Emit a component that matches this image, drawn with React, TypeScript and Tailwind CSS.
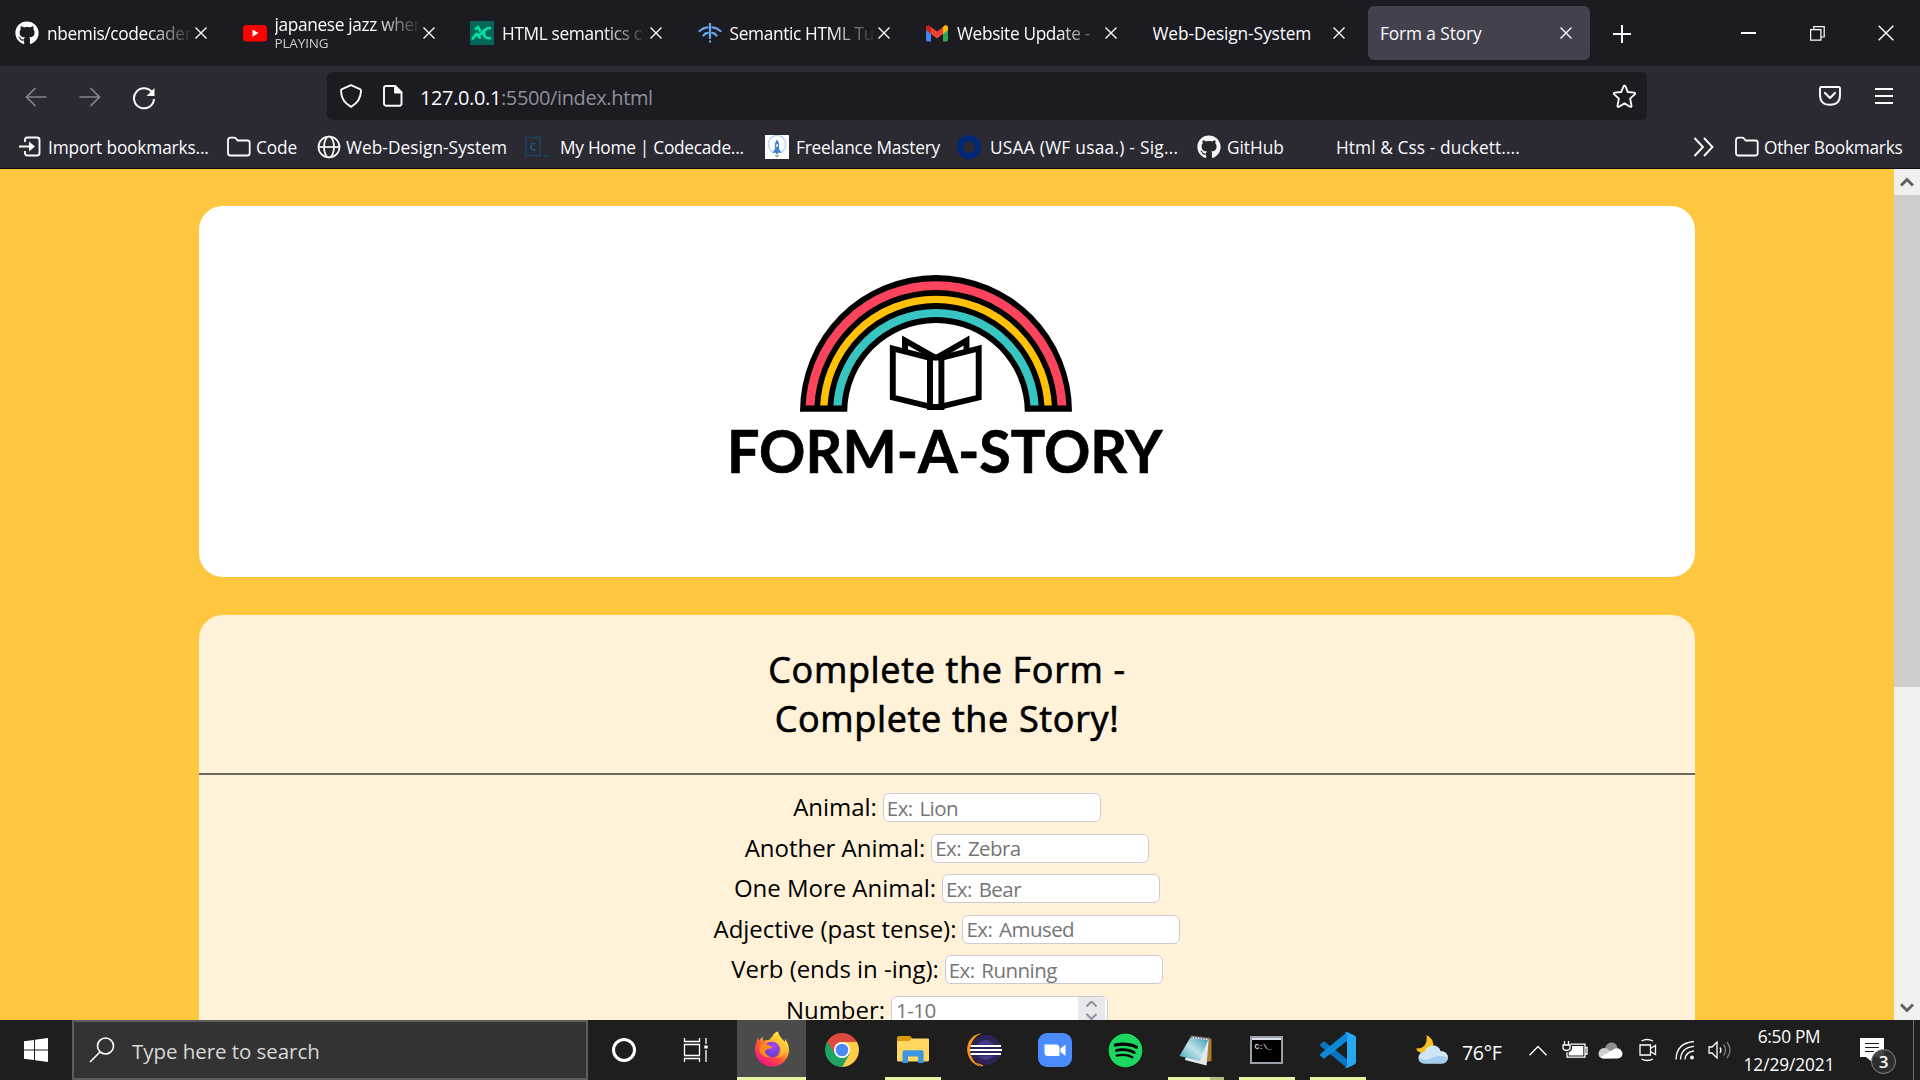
import React from "react";
import { FaGithub, FaSpotify } from "react-icons/fa";

/* ---------- small stroke icons ---------- */

function Cross({ size = 12, width = 1.4 }: { size?: number; width?: number }) {
  return (
    <svg width={size} height={size} viewBox="0 0 12 12" className="shrink-0 overflow-visible" stroke="#fbfbfe" strokeWidth={width} fill="none">
      <path d="M0.5 0.5 11.5 11.5M11.5 0.5 0.5 11.5" />
    </svg>
  );
}

function FolderIcon() {
  return (
    <svg width="24" height="24" viewBox="0 0 24 24" fill="none" stroke="#fbfbfe" strokeWidth="1.8" strokeLinejoin="round" className="shrink-0">
      <path d="M1 18V5.500Q1 2.600 3.500 2.600H7.200Q8.300 2.600 9 3.500L10.500 5.500H20.500Q22.700 5.500 22.700 7.800V18Q22.700 20.500 20.300 20.500H3.400Q1 20.500 1 18Z" />
    </svg>
  );
}

/* ---------- tab favicons ---------- */

function YoutubeIcon() {
  return (
    <svg width="24" height="24" viewBox="0 0 24 24" className="shrink-0">
      <rect x="0" y="4" width="24" height="16.500" rx="3.500" fill="#f00" />
      <path d="M9.500 8.500v7.200l6-3.600z" fill="#fff" />
    </svg>
  );
}

function AcIcon() {
  return (
    <svg width="24" height="24" viewBox="0 0 24 24" className="shrink-0">
      <rect width="24" height="24" fill="#03685b" />
      <path d="M5 8.500 8 6 10.500 10.500M2 18.500 6.500 13 10.500 17.500M5 14l6-.8 3.500-4.500M21 7.500c-3-1.500-7.500 1-7 5.500.3 3.500 3.500 5 7 4" fill="none" stroke="#04e3a5" strokeWidth="2.600" />
    </svg>
  );
}

function FlowIcon() {
  return (
    <svg width="24" height="24" viewBox="0 0 24 24" className="shrink-0" fill="none" stroke="#6aa5e8" strokeWidth="2.300" strokeLinecap="round">
      <path d="M12 3v14M12 20.500v.2M1.500 10Q5.500 6.500 9.500 6.300M22.500 10Q18.500 6.500 14.500 6.300M5.500 14.500Q7 12 9.500 12M18.500 14.500Q17 12 14.500 12" />
    </svg>
  );
}

function GmailIcon() {
  return (
    <svg width="24" height="24" viewBox="0 0 24 24" className="shrink-0">
      <path d="M1 9v9.700Q1 20.500 2.800 20.500H6V12z" fill="#4285f4" />
      <path d="M18 12v8.500h3.200q1.800 0 1.800-1.800V9z" fill="#34a853" />
      <path d="M18 6v7l5-4V6.500Q23 4 20.700 4 19.800 4 18 6z" fill="#fbbc04" />
      <path d="M6 13V6L12 10.600 18 6v7l-6 4.500z" fill="#ea4335" />
      <path d="M1 6.500V9l5 4V6Q4.500 4 3.300 4 1 4 1 6.500z" fill="#c5221f" />
    </svg>
  );
}

type Tab = { title: string; icon?: React.ReactNode; sub?: string; fade?: boolean; active?: boolean };

const tabs: Tab[] = [
  { title: "nbemis/codecaden", icon: <FaGithub size={24} color="#fff" className="shrink-0" />, fade: true },
  { title: "japanese jazz when", icon: <YoutubeIcon />, sub: "PLAYING", fade: true },
  { title: "HTML semantics c", icon: <AcIcon />, fade: true },
  { title: "Semantic HTML Tu", icon: <FlowIcon />, fade: true },
  { title: "Website Update -", icon: <GmailIcon />, fade: true },
  { title: "Web-Design-System" },
  { title: "Form a Story", active: true },
];

function TabItem({ tab }: { tab: Tab }) {
  return (
    <div className={`mr-[5.500px] flex h-[54px] w-[222px] shrink-0 items-center rounded-md pl-3 ${tab.active ? "bg-[#42414d]" : ""}`}>
      {tab.icon}
      <div
        className={`flex-1 overflow-hidden whitespace-nowrap ${tab.icon ? "ml-[8px]" : ""} ${
          tab.fade ? "[mask-image:linear-gradient(to_right,#000_68%,transparent_99%)]" : ""
        }`}
      >
        <div className={`text-[17.300px] ${tab.fade ? "tracking-[-0.350px]" : "tracking-[-0.100px]"} ${tab.sub ? "leading-[21px]" : "pt-[2px] leading-6"}`}>
          {tab.title}
        </div>
        {tab.sub && <div className="text-[13.500px] leading-[17px] tracking-[-0.150px] text-[#c9c9cd]">{tab.sub}</div>}
      </div>
      <div className="mr-[18px] flex w-3 shrink-0 justify-center">
        <Cross />
      </div>
    </div>
  );
}

function TabStrip() {
  return (
    <div className="flex h-[66px] items-center bg-[#1c1b22] pl-[3px]">
      {tabs.map((t) => (
        <TabItem key={t.title} tab={t} />
      ))}
      <svg width="18" height="18" viewBox="0 0 18 18" stroke="#fbfbfe" strokeWidth="2" className="ml-[17px] mt-[2px] shrink-0">
        <path d="M9 0v18M0 9h18" />
      </svg>
      <div className="ml-[110px] h-[1.500px] w-[15px] shrink-0 bg-white" />
      <svg width="15" height="15" viewBox="0 0 15 15" fill="none" stroke="#fff" strokeWidth="1.200" className="ml-[54px] shrink-0">
        <path d="M.6 3.600h10.300v10.500H.6zM3.800 3.600V.7h10.400v10.300h-3.300" />
      </svg>
      <div className="ml-[53px]">
        <Cross size={16} width={1.1} />
      </div>
    </div>
  );
}

/* ---------- navigation bar ---------- */

function NavBar() {
  return (
    <div className="flex h-[60px] items-center bg-[#2b2a33] pl-[25px]">
      <svg width="22" height="20" viewBox="0 0 22 20" fill="none" stroke="#85848b" strokeWidth="1.700" className="mt-0.5 shrink-0">
        <path d="M21.500 10H1.500M10.500 1 1.500 10l9 9" />
      </svg>
      <svg width="22" height="20" viewBox="0 0 22 20" fill="none" stroke="#85848b" strokeWidth="1.700" className="ml-8 mt-0.5 shrink-0">
        <path d="M.5 10h20M11.500 1l9 9-9 9" />
      </svg>
      <svg width="24" height="24" viewBox="0 0 24 24" fill="none" stroke="#fbfbfe" strokeWidth="2" className="ml-[31px] mt-1 shrink-0">
        <path d="M20.500 7A10 10 0 1 0 22 13" />
        <path d="M22.500 2v8h-8z" fill="#fbfbfe" stroke="none" />
      </svg>
      <div className="ml-[171px] flex h-12 w-[1320px] shrink-0 items-center rounded-md bg-[#1c1b22] pl-[13px]">
        <svg width="22" height="24" viewBox="0 0 22 24" fill="none" stroke="#fbfbfe" strokeWidth="1.900" strokeLinejoin="round" className="shrink-0">
          <path d="M11 1.200 20 5.200Q21 5.700 21 6.800 20.800 17.500 11 22.800 1.200 17.500 1 6.800 1 5.700 2 5.200Z" />
        </svg>
        <svg width="20" height="22" viewBox="0 0 20 22" fill="none" stroke="#fbfbfe" strokeWidth="1.900" strokeLinejoin="round" className="ml-[21px] shrink-0">
          <path d="M3 1h9l6.500 6.500V18.500q0 2.200-2.200 2.200H3.200Q1 20.700 1 18.500V3Q1 1 3 1z" />
          <path d="M12 1v6.500h6.500z" fill="#fbfbfe" />
        </svg>
        <div className="ml-[17px] flex-1 whitespace-nowrap pt-[3px] text-[20px] tracking-[-0.380px] text-[#8f8f98]">
          <span className="text-[#fbfbfe]">127.0.0.1</span>:5500/index.html
        </div>
        <svg width="25" height="25" viewBox="0 0 24 24" fill="none" stroke="#fbfbfe" strokeWidth="1.800" strokeLinejoin="round" className="mr-[10px] shrink-0">
          <path d="M12 1.500Q12.600 1.500 13 2.400L15.200 7.700 21.300 8.300Q23 8.600 21.800 10L17.400 14l1.300 6.700q.2 1.700-1.400 1.100L12 18.600 6.700 21.800q-1.600.6-1.400-1.100L6.600 14 2.200 10Q1 8.600 2.700 8.300L8.800 7.700 11 2.400Q11.400 1.500 12 1.500Z" />
        </svg>
      </div>
      <svg width="22" height="20" viewBox="0 0 22 20" fill="none" stroke="#fbfbfe" strokeWidth="1.900" strokeLinejoin="round" className="ml-[172px] shrink-0">
        <path d="M2.500 1h17Q21 1 21 2.600V9Q21 18.800 11 18.800T1 9V2.600Q1 1 2.500 1z" />
        <path d="M6 7l5 5 5-5" strokeLinecap="round" strokeWidth="2.200" />
      </svg>
      <svg width="18" height="16" viewBox="0 0 18 16" stroke="#fbfbfe" strokeWidth="1.900" className="ml-[34px] shrink-0">
        <path d="M0 1h18M0 8h18M0 15h18" />
      </svg>
    </div>
  );
}

/* ---------- bookmarks ---------- */

function BookmarksBar() {
  return (
    <div className="flex h-[42px] items-center whitespace-nowrap bg-[#2b2a33] pl-[18px] text-[17.300px] tracking-[-0.150px]">
      <div className="flex w-[209px] shrink-0 items-center">
        <svg width="24" height="24" viewBox="0 0 24 24" fill="none" stroke="#fbfbfe" strokeWidth="1.900" className="mr-[6px]">
          <path d="M7 7V5q0-2.500 2.500-2.500h9.500Q21.500 2.500 21.500 5v13q0 2.500-2.500 2.500H9.500Q7 20.500 7 18v-2M1 11.500h11" />
          <path d="M11 6.500l6 5-6 5z" fill="#fbfbfe" stroke="none" />
        </svg>
        <span className="pt-[2px]">Import bookmarks...</span>
      </div>
      <div className="flex w-[90px] shrink-0 items-center gap-[5px]">
        <FolderIcon />
        <span className="pt-[2px]">Code</span>
      </div>
      <div className="flex w-[208px] shrink-0 items-center gap-[5px]">
        <svg width="24" height="24" viewBox="0 0 24 24" fill="none" stroke="#fbfbfe" strokeWidth="1.700">
          <circle cx="12" cy="12" r="10.500" />
          <ellipse cx="12" cy="12" rx="5" ry="10.500" />
          <path d="M1.500 12h21" />
        </svg>
        <span className="pt-[2px] tracking-[0.040px]">Web-Design-System</span>
      </div>
      <div className="flex w-[240px] shrink-0 items-center gap-[11px]">
        <svg width="24" height="24" viewBox="0 0 24 24" fill="none" stroke="#1d4360" strokeWidth="1.700">
          <path d="M1 2.500h14v18H1zM18 21h6" />
          <path d="M10.500 9Q8.500 7.500 6.500 9.200 5 11.500 6.500 14q2 1.700 4 .2" stroke="#1f4f78" />
        </svg>
        <span className="pt-[2px] tracking-[-0.270px]">My Home | Codecade...</span>
      </div>
      <div className="flex w-[192px] shrink-0 items-center gap-[7px]">
        <svg width="24" height="24" viewBox="0 0 24 24">
          <rect width="24" height="24" fill="#fff" />
          <path d="M7.500 17A8.500 9 0 1 1 16.500 17" fill="none" stroke="#b9d5f2" strokeWidth="1.300" />
          <path d="M12 4.500Q15 8 14 14l3 4.500-3-1-2 2-2-2-3 1 3-4.500Q9 8 12 4.500z" fill="#3b82cf" />
          <circle cx="12" cy="10.500" r="1.300" fill="#e5f1fd" />
          <path d="M9.500 20h5l-2.500 3z" fill="#a9a9ad" />
        </svg>
        <span className="pt-[2px] tracking-[-0.200px]">Freelance Mastery</span>
      </div>
      <div className="flex w-[240px] shrink-0 items-center gap-[9px]">
        <div className="h-6 w-6 rounded-full border-[6px] border-[#00277a]" />
        <span className="pt-[2px] tracking-[0.270px]">USAA (WF usaa.) - Sig...</span>
      </div>
      <div className="flex w-[139px] shrink-0 items-center gap-[6px]">
        <div className="flex h-6 w-6 items-center justify-center rounded-full bg-[#24292e]">
          <FaGithub size={24} color="#f5f5f5" />
        </div>
        <span className="pt-[2px] tracking-[-0.050px]">GitHub</span>
      </div>
      <div className="w-[357px] shrink-0 pt-[2px] tracking-[0.100px]">Html &amp; Css - duckett....</div>
      <svg width="22" height="20" viewBox="0 0 22 20" fill="none" stroke="#fbfbfe" strokeWidth="1.900" className="shrink-0">
        <path d="M1.500 1l8.500 9-8.500 9M11 1l8.500 9-8.500 9" />
      </svg>
      <div className="ml-[20px] flex items-center gap-[5px]">
        <FolderIcon />
        <span className="pt-[2px] tracking-[-0.270px]">Other Bookmarks</span>
      </div>
    </div>
  );
}

/* ---------- page ---------- */

function Logo() {
  return (
    <svg width="440" height="206" viewBox="726 272 440 206">
      <clipPath id="bow">
        <rect x="790" y="270" width="300" height="135.500" />
      </clipPath>
      <path d="M800 411.700a136 136.700 0 0 1 272 0z" fill="#000" />
      <g fill="none" clipPath="url(#bow)">
        <circle cx="936" cy="411.700" r="126.100" stroke="#fc455c" strokeWidth="8.800" />
        <circle cx="936" cy="411.700" r="112.300" stroke="#ffc107" strokeWidth="7.400" />
        <circle cx="936" cy="411.700" r="98.700" stroke="#38c5c1" strokeWidth="8.200" />
      </g>
      <path d="M847.200 412a88.800 89 0 0 1 177.600 0z" fill="#fff" />
      <g fill="#fff" stroke="#000" strokeWidth="5.900">
        <path d="M905 350.500V340.500L935 357.500" />
        <path d="M966.500 350.500V340.500L937 357.500" />
        <path d="M892.800 348.500 930 358v48.500L892.800 397.500z" />
        <path d="M978.700 348.500 941 358v48.500L978.700 397.500z" />
        <path d="M930 357.500h11.400v49.500H930z" />
      </g>
      <text x="727" y="472.600" textLength="435.500" lengthAdjust="spacingAndGlyphs" fontFamily="Lato" fontWeight="700" fontSize="59" fill="#000" stroke="#000" strokeWidth="0.700">
        FORM-A-STORY
      </text>
    </svg>
  );
}

const fields = [
  ["Animal:", "Ex: Lion"],
  ["Another Animal:", "Ex: Zebra"],
  ["One More Animal:", "Ex: Bear"],
  ["Adjective (past tense):", "Ex: Amused"],
  ["Verb (ends in -ing):", "Ex: Running"],
];

const inputClass =
  "mt-[1px] h-[29px] w-[218px] rounded-[6px] border border-[#cbcbd0] bg-white pl-[3px] text-[20.500px] leading-none tracking-[-0.550px] [word-spacing:2px] text-black outline-none placeholder:text-[#757575]";

function Page() {
  return (
    <div className="flex h-[851px] overflow-hidden bg-[#ffc640]">
      <main className="w-[1894px] px-[199px] pt-[37px] text-black">
        <section className="flex h-[371px] justify-center rounded-[24px] bg-white pr-[3px] pt-[66px]">
          <Logo />
        </section>
        <section className="mt-[38px] h-[500px] rounded-t-[24px] bg-[#fff2d9]">
          <h1 className="h-[160px] border-b-2 border-[#6b6862] pt-[30px] text-center text-[36px] leading-[49px] tracking-[0.650px] [-webkit-text-stroke:0.700px_#000]">
            Complete the Form -<br />
            Complete the Story!
          </h1>
          <div className="mt-[12px]">
            {fields.map(([label, hint]) => (
              <div key={label} className="flex h-[40.500px] items-center justify-center gap-[6px] text-[24px] tracking-[-0.030px]">
                <label>{label}</label>
                <input className={inputClass} placeholder={hint} />
              </div>
            ))}
            <div className="flex h-[40.500px] items-center justify-center gap-[6px] text-[24px] tracking-[-0.030px]">
              <label>Number:</label>
              <div className="mt-[1px] flex h-[29px] w-[217px] items-center rounded-[6px] border border-[#cbcbd0] bg-white pl-[4px] text-[20.500px] tracking-[-0.550px] text-[#757575]">
                1-10
                <div className="ml-auto mr-[2px] flex h-full w-[27px] items-center justify-center bg-[#e9e9ed]">
                  <svg width="11" height="19" viewBox="0 0 11 19" fill="none" stroke="#8f8f9d" strokeWidth="2">
                    <path d="M.5 5.500l5-5 5 5M.5 13l5 5 5-5" />
                  </svg>
                </div>
              </div>
            </div>
          </div>
        </section>
      </main>
      <div className="flex w-[26px] flex-col bg-[#f0f0f0]">
        <div className="flex h-[26px] items-center justify-center">
          <svg width="14" height="10" viewBox="0 0 14 10" fill="none" stroke="#606060" strokeWidth="3">
            <path d="M1 8.500l6-6 6 6" />
          </svg>
        </div>
        <div className="h-[492px] bg-[#cdcdcd]" />
        <div className="mt-auto flex h-[24px] items-center justify-center">
          <svg width="14" height="10" viewBox="0 0 14 10" fill="none" stroke="#606060" strokeWidth="3">
            <path d="M1 1.500l6 6 6-6" />
          </svg>
        </div>
      </div>
    </div>
  );
}

/* ---------- taskbar ---------- */

function FirefoxIcon() {
  return (
    <svg width="36" height="36" viewBox="0 0 36 36">
      <defs>
        <linearGradient id="ffa" x1="0.850" y1="0.100" x2="0.250" y2="0.950">
          <stop offset="0" stopColor="#fff44f" />
          <stop offset="0.350" stopColor="#ffb22c" />
          <stop offset="0.600" stopColor="#ff5634" />
          <stop offset="1" stopColor="#f2128a" />
        </linearGradient>
        <radialGradient id="ffb" cx="0.600" cy="0.300" r="0.800">
          <stop offset="0" stopColor="#a947f5" />
          <stop offset="1" stopColor="#5040c8" />
        </radialGradient>
      </defs>
      <path d="M2.500 11 4 7l1.500 3Q6.500 6.500 9 6v4q3-1.500 6-1Q18 6 18.500 5 20.500 1 24 .5q.5 4 4 7.500L31 11V8q4 5 4 11A17 16.500 0 0 1 1 19Q1 14 2.500 11z" fill="url(#ffa)" />
      <circle cx="18" cy="18.500" r="7.800" fill="url(#ffb)" />
      <path d="M5.500 14Q11 11 18.500 16q-1 2-4.500 2-3 .5-3 3 1 3.500 5.500 4.500-7 2-11-5z" fill="#ff8b20" />
      <path d="M19 9q8 1 8 10 0 6-6 8 10 0 10.500-9Q31 11 24 3q-3 3-5 6z" fill="#ffc832" opacity=".7" />
    </svg>
  );
}

function ChromeIcon() {
  return (
    <svg width="34" height="34" viewBox="0 0 34 34">
      <path d="M17 17 2.300 8.500A17 17 0 0 0 17 34l8-13z" fill="#1da462" />
      <path d="M17 9h15a17 17 0 0 1-15 25l7.500-13z" fill="#ffcd46" />
      <path d="M2.300 8.500 10 21l7-4V9h15l-.3-.5A17 17 0 0 0 2.300 8.500z" fill="#dd4b3e" />
      <circle cx="17" cy="17" r="8" fill="#fff" />
      <circle cx="17" cy="17" r="6.300" fill="#4a8af4" />
    </svg>
  );
}

function ExplorerIcon() {
  return (
    <svg width="32" height="28" viewBox="0 0 32 28">
      <path d="M0 2Q0 0 2 0h11l3 3h14q2 0 2 2v6H0z" fill="#dc9a08" />
      <path d="M0 6.500Q0 5 1.500 5H12l3-2.500h16q1 0 1 1V24q0 1.500-1.500 1.500h-29Q0 25.500 0 24z" fill="#ffd862" />
      <path d="M5.500 27V16q0-1.800 1.800-1.800h17.500q1.800 0 1.800 1.800v11h-5.500v-6.500H11V27z" fill="#3a97e0" />
    </svg>
  );
}

function EclipseIcon() {
  return (
    <svg width="36" height="34" viewBox="0 0 36 34">
      <path d="M16 .5A17 17 0 0 0 17 33.500L17 31A14 14 0 0 1 16 .5z" fill="#f7941e" />
      <path d="M15 .3C-3 4-3 30 15 33.700 1 27 1 7 15 .3z" fill="#f7941e" />
      <circle cx="19.700" cy="17" r="15.300" fill="#2c2255" />
      <circle cx="19.500" cy="17" r="10" fill="#463889" />
      <path d="M4.500 11.500h30.800v11H4.500z" fill="#2c2255" />
      <path d="M4.500 13H35M4 17h32M4.500 21H35" stroke="#fff" strokeWidth="2" />
    </svg>
  );
}

function ZoomIcon() {
  return (
    <svg width="34" height="34" viewBox="0 0 34 34">
      <rect width="34" height="34" rx="9" fill="#4a8cff" />
      <path d="M6.500 11.500H18q3.500 0 3.500 3.500v8H10q-3.500 0-3.500-3.500zM22.500 15.500 27.500 11.500v11.500l-5-4z" fill="#fff" />
    </svg>
  );
}

function NotepadIcon() {
  return (
    <svg width="34" height="32" viewBox="0 0 34 32">
      <defs>
        <linearGradient id="note" x1="0" y1="1" x2="1" y2="0">
          <stop offset="0" stopColor="#3aa3b5" />
          <stop offset="0.500" stopColor="#bfe4ec" />
          <stop offset="1" stopColor="#3c99ac" />
        </linearGradient>
      </defs>
      <path d="M30 4l2.500 1v22l-5 1z" fill="#a77b2b" />
      <path d="M12 2l18 2.500-2.500 27L6 26z" fill="#e4eaec" />
      <path d="M11 4l18 2-8 21L.5 22z" fill="url(#note)" />
      <path d="M12 2.500l18 2" stroke="#6d6d6d" strokeWidth="2.500" strokeDasharray="1.500 1.300" />
    </svg>
  );
}

function CmdIcon() {
  return (
    <div className="flex h-[28px] w-[33px] flex-col border-2 border-[#9aa1a8] bg-black">
      <div className="h-[2px] bg-[#dfe3e6]" />
      <div className="pl-[2px] pt-[2px] font-['Liberation_Mono'] text-[8px] font-bold leading-[9px] tracking-[-0.500px] text-[#d8d8d8]">C:\_</div>
    </div>
  );
}

function VsCodeIcon() {
  return (
    <svg width="36" height="36" viewBox="0 0 36 36">
      <path d="M0 12.500 3 9.800Q4 9.300 5 10L27 27v9L1 14.500Q0 13.500 0 12.500z" fill="#0a74bd" />
      <path d="M0 23.500 3 26.200Q4 26.700 5 26L27 9V0L1 21.500Q0 22.500 0 23.500z" fill="#0d8ad6" />
      <path d="M27 0l7.500 3.500Q36 4.300 36 6v24q0 1.700-1.500 2.500L27 36q-1.500.3-2.300-.5Q27 36 27 33.500v-31Q27 0 24.700.5 25.500-.3 27 0z" fill="#28a8ee" />
    </svg>
  );
}

const apps: { name: string; icon: React.ReactNode; open?: boolean; stacked?: boolean }[] = [
  { name: "chrome", icon: <ChromeIcon /> },
  { name: "explorer", icon: <ExplorerIcon />, open: true },
  { name: "eclipse", icon: <EclipseIcon /> },
  { name: "zoom", icon: <ZoomIcon /> },
  {
    name: "spotify",
    icon: (
      <div className="rounded-full bg-black">
        <FaSpotify size={35} color="#1ed760" />
      </div>
    ),
  },
  { name: "notepad", icon: <NotepadIcon />, open: true, stacked: true },
  { name: "cmd", icon: <CmdIcon />, open: true },
  { name: "vscode", icon: <VsCodeIcon />, open: true },
];

function Tray() {
  return (
    <div className="flex h-[60px] flex-1 items-center text-white">
      <svg width="34" height="32" viewBox="0 0 34 32" className="ml-[42px] shrink-0">
        <path d="M11.500 1Q20 5 18 14 14 21 5 18.500 2 17.500 1 14.500 13 15 11.500 1z" fill="#fbbf1c" />
        <path d="M9.500 29.500Q3.500 29 3.500 23.500 4 18 9.500 18 11.500 11.500 18 11.500q6 0 7.500 5.500 7 .2 7.500 6.500-.5 6-7 6z" fill="#cfe5f8" />
        <path d="M9.500 29.500Q3.500 29 3.500 23.500q6 4 13 .5t16.500-.5q-.5 6-7 6z" fill="#a5cdee" />
      </svg>
      <span className="ml-[13px] w-[67px] shrink-0 pt-[5px] text-[19.500px] tracking-[-0.300px]">76°F</span>
      <svg width="18" height="11" viewBox="0 0 18 11" fill="none" stroke="#fff" strokeWidth="1.400" className="shrink-0">
        <path d="M.5 10.300 9 1.500l8.500 8.800" />
      </svg>
      <svg width="26" height="18" viewBox="0 0 26 18" fill="none" stroke="#fff" strokeWidth="1.300" className="ml-[15px] shrink-0">
        <path d="M8.500 3.200H23v13H5v-5M23 6.500h2V13h-2M2.500 0v4M6.500 0v4M1 4h7v3Q8 9 4.500 9.500 1 9 1 7z" />
        <path d="M10 5h11.300v9.500H6.700v-3.500Q10 10 10 7z" fill="#fff" stroke="none" />
      </svg>
      <svg width="25" height="17" viewBox="0 0 25 17" className="ml-[10px] shrink-0">
        <path d="M7 6Q9 0 14.500.5 19 1.500 19.500 6L12 11z" fill="#8d8d8d" />
        <path d="M5 16.500Q.5 16 .5 11.500 1 6.500 6 6q3 0 5 2l9 5-4 3z" fill="#cfcfcf" />
        <path d="M5 16.500 2.500 15 17 6.500q6-1 7.500 5-.2 4.500-5 5z" fill="#fff" />
      </svg>
      <svg width="18" height="24" viewBox="0 0 18 24" fill="none" stroke="#fff" strokeWidth="1.300" className="ml-[16px] shrink-0">
        <path d="M1 7h10.500v10H1zM11.500 10.500 16.500 7.500v9l-5-3M2.500 3Q8 0 14 3M2.500 21Q8 24 14 21" />
      </svg>
      <svg width="20" height="20" viewBox="0 0 20 20" fill="none" stroke="#fff" strokeWidth="1.300" className="ml-[18px] shrink-0">
        <path d="M1 19.500Q1.500 3 19 1.500M5.500 19.500Q6 7.500 19 6.300M10 19.500Q10.500 12 19 11" />
        <circle cx="17" cy="17.500" r="1.900" fill="#fff" stroke="none" />
      </svg>
      <svg width="24" height="20" viewBox="0 0 24 20" fill="none" stroke="#fff" strokeWidth="1.300" className="ml-[13px] shrink-0">
        <path d="M1 7h3l5-5v16l-5-5H1zM12 7.500q1.800 2.500 0 5.500" />
        <path d="M15.500 4.500q4 5.500 0 11M19 2q6 8 0 16" stroke="#7d7d7d" />
      </svg>
      <div className="ml-[8px] w-[98px] shrink-0 whitespace-nowrap pt-[1px] text-center text-[17.300px] leading-[28px] tracking-[-0.080px]">
        <span className="tracking-[-0.300px]">6:50 PM</span>
        <br />
        12/29/2021
      </div>
      <div className="relative ml-[22px] h-6 w-6 shrink-0">
        <svg width="24" height="24" viewBox="0 0 24 24">
          <path d="M0 0h24v19H12v5l-6-5H0z" fill="#fff" />
          <path d="M5 5.500h14M5 9.500h14M5 13.500h9" stroke="#1e1e1e" strokeWidth="1.200" />
        </svg>
        <div className="absolute left-[11px] top-[11px] flex h-[25px] w-[25px] items-center justify-center rounded-full border border-[#858585] bg-[#303030]/90 text-[17px] font-semibold">3</div>
      </div>
      <div className="ml-auto mr-[6px] h-[60px] w-[1.500px] bg-[#6d6d6d]" />
    </div>
  );
}

function Taskbar() {
  return (
    <div className="flex h-[60px] items-center bg-[#1e1e1e]">
      <div className="flex w-[72px] shrink-0 justify-center">
        <svg width="24" height="24" viewBox="0 0 24 24" fill="#fff">
          <path d="M0 3.300 10 2v9.500H0zM11 1.800 24 0v11.500H11zM0 12.500h10V22L0 20.700zM11 12.500h13V24l-13-1.800z" />
        </svg>
      </div>
      <div className="flex h-[60px] w-[516px] shrink-0 items-center border-2 border-[#5c5c5c] bg-[#333]">
        <svg width="26" height="26" viewBox="0 0 26 26" fill="none" stroke="#fff" strokeWidth="1.600" className="ml-[15px]">
          <circle cx="16.500" cy="9" r="8" />
          <path d="M11 15 1 25" />
        </svg>
        <span className="ml-[17px] pt-[3px] text-[20.500px] tracking-[-0.050px] text-[#d8d8d8]">Type here to search</span>
      </div>
      <div className="ml-[24px] h-[24px] w-[24px] shrink-0 rounded-full border-[3px] border-white" />
      <svg width="25" height="24" viewBox="0 0 25 24" fill="none" stroke="#fff" strokeWidth="1.300" className="ml-[47px] shrink-0">
        <path d="M1.500 6.500h15v11h-15zM1.500 0v3.500h15V0M1.500 24v-3.500h15V24M23 0v6M23 12v12" />
        <path d="M21.300 7.500h3.400v3h-3.400z" fill="#fff" stroke="none" />
      </svg>
      <div className="ml-[29px] flex h-[60px] w-[69px] shrink-0 flex-col items-center justify-between bg-[#4b4b4b]">
        <div className="flex h-[57px] items-center">
          <FirefoxIcon />
        </div>
        <div className="h-[3px] w-full bg-[#e4f6a4]" />
      </div>
      <div className="ml-[1px] flex shrink-0">
        {apps.map((a) => (
          <div key={a.name} className="flex h-[60px] w-[70.750px] flex-col items-center">
            <div className="flex h-[57px] items-center pt-[3px]">{a.icon}</div>
            {a.open && (
              <div className="flex h-[3px] w-[56px] justify-end bg-[#e4f6a4]">{a.stacked && <div className="h-full w-[14px] bg-[#b3c07f]" />}</div>
            )}
          </div>
        ))}
      </div>
      <Tray />
    </div>
  );
}

export default function App() {
  return (
    <div className="flex h-[1080px] w-[1920px] flex-col overflow-hidden font-['Open_Sans','Noto_Sans',sans-serif] text-[#fbfbfe]">
      <TabStrip />
      <NavBar />
      <BookmarksBar />
      <div className="h-[1px] bg-[#0c0c0d]" />
      <Page />
      <Taskbar />
    </div>
  );
}
